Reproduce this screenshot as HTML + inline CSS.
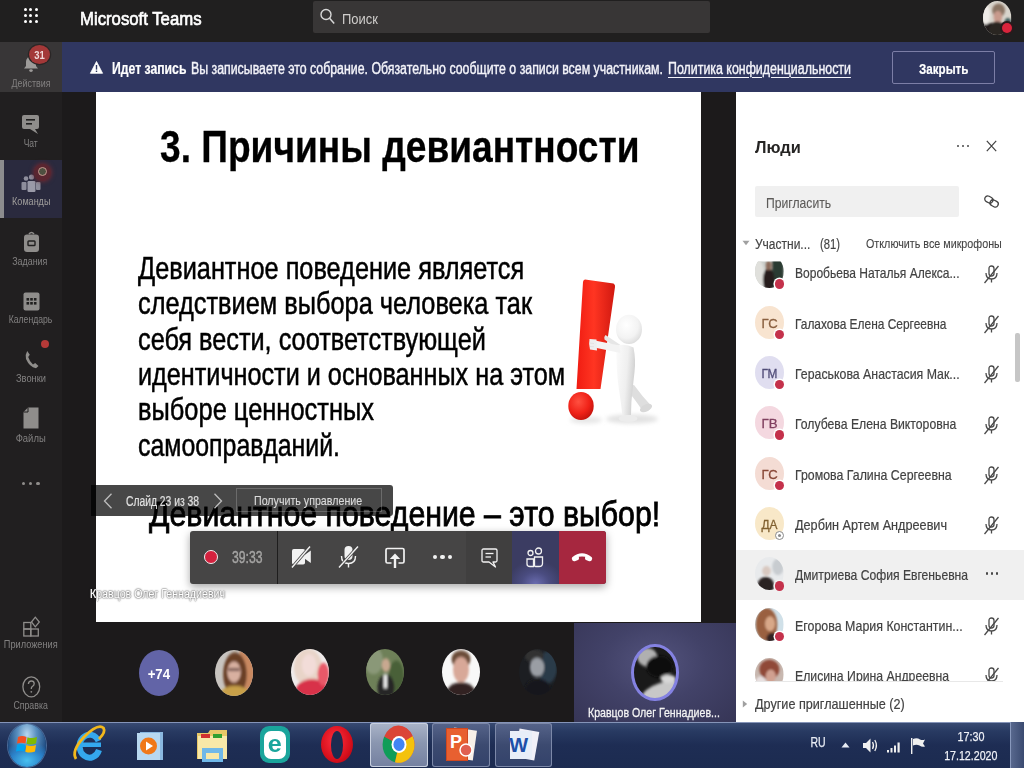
<!DOCTYPE html>
<html><head><meta charset="utf-8"><style>
html,body{margin:0;padding:0;width:1024px;height:768px;overflow:hidden;background:#1c1a1b;}
body{position:relative;font-family:"Liberation Sans", sans-serif;}
.t{position:absolute;white-space:nowrap;line-height:1;}
svg{position:absolute;overflow:visible;}
</style></head><body>
<div style="position:absolute;left:0px;top:0px;width:1024px;height:42px;background:#201f1f"></div>
<div style="position:absolute;left:23.9px;top:8.1px;width:3px;height:3px;background:#fff;border-radius:50%"></div>
<div style="position:absolute;left:29.3px;top:8.1px;width:3px;height:3px;background:#fff;border-radius:50%"></div>
<div style="position:absolute;left:34.8px;top:8.1px;width:3px;height:3px;background:#fff;border-radius:50%"></div>
<div style="position:absolute;left:23.9px;top:14.1px;width:3px;height:3px;background:#fff;border-radius:50%"></div>
<div style="position:absolute;left:29.3px;top:14.1px;width:3px;height:3px;background:#fff;border-radius:50%"></div>
<div style="position:absolute;left:34.8px;top:14.1px;width:3px;height:3px;background:#fff;border-radius:50%"></div>
<div style="position:absolute;left:23.9px;top:20.4px;width:3px;height:3px;background:#fff;border-radius:50%"></div>
<div style="position:absolute;left:29.3px;top:20.4px;width:3px;height:3px;background:#fff;border-radius:50%"></div>
<div style="position:absolute;left:34.8px;top:20.4px;width:3px;height:3px;background:#fff;border-radius:50%"></div>
<div class="t" style="left:80.0px;top:8.5px;font-size:19px;font-weight:400;color:#fff;transform:scaleX(0.881);transform-origin:left;-webkit-text-stroke:0.7px #fff">Microsoft Teams</div>
<div style="position:absolute;left:312.8px;top:0.5px;width:397.5px;height:32.5px;background:#383636;border-radius:2px"></div>
<svg style="left:320px;top:8px" width="16" height="18" viewBox="0 0 16 18"><circle cx="6" cy="6.5" r="5" fill="none" stroke="#d8d8d8" stroke-width="1.4"/><line x1="9.6" y1="10.3" x2="14.2" y2="15.6" stroke="#d8d8d8" stroke-width="1.5"/></svg>
<div class="t" style="left:342.0px;top:11.5px;font-size:14px;font-weight:400;color:#cfcdcb;transform:scaleX(0.928);transform-origin:left;">Поиск</div>
<svg style="left:982.8px;top:0.5px;" width="28.4" height="34.0" viewBox="-1 -1 2 2" preserveAspectRatio="none"><defs><clipPath id="ctp"><ellipse cx="0" cy="0" rx="1" ry="1"/></clipPath><filter id="ftp" x="-1" y="-1" width="3" height="3"><feGaussianBlur stdDeviation="0.06"/></filter></defs><g clip-path="url(#ctp)"><rect x="-1" y="-1" width="2" height="2" fill="#d8d4cc"/><g filter="url(#ftp)"><ellipse cx="0.1" cy="-0.45" rx="0.45" ry="0.4" fill="#8a7464"/><ellipse cx="0.05" cy="-0.05" rx="0.3" ry="0.38" fill="#c89a8c"/><rect x="-1" y="0.3" width="2" height="0.8" fill="#221e1e"/><ellipse cx="0" cy="0.7" rx="0.55" ry="0.5" fill="#2a2624"/><ellipse cx="0.75" cy="0.3" rx="0.25" ry="0.3" fill="#3a5a58"/><ellipse cx="-0.8" cy="-0.2" rx="0.3" ry="0.6" fill="#f0ece8"/></g></g></svg>
<div style="position:absolute;left:1001.5px;top:23px;width:10px;height:10px;background:#d9243c;border-radius:50%;box-shadow:0 0 0 2px #2a1a1c"></div>
<div style="position:absolute;left:0px;top:42px;width:62px;height:680px;background:#211f20"></div>
<div style="position:absolute;left:0px;top:42px;width:62px;height:50px;background:#383637"></div>
<div style="position:absolute;left:0px;top:159.5px;width:62px;height:58.5px;background:#2a2a3e"></div>
<div style="position:absolute;left:0px;top:159.5px;width:4px;height:58.5px;background:#8c8c8e"></div>
<div style="position:absolute;left:62px;top:42px;width:962px;height:50px;background:#303761"></div>
<svg style="left:90px;top:61px" width="13" height="13" viewBox="0 0 13 13"><path d="M6.5 0.5 L12.6 12.3 L0.4 12.3 Z" fill="#fff" stroke="#fff" stroke-width="0.8" stroke-linejoin="round"/><rect x="5.8" y="4" width="1.4" height="4.6" fill="#303761"/><rect x="5.8" y="9.6" width="1.4" height="1.4" fill="#303761"/></svg>
<div class="t" style="left:111.6px;top:60.6px;font-size:15.8px;font-weight:700;color:#fff;transform:scaleX(0.773);transform-origin:left;-webkit-text-stroke:0.2px #fff">Идет запись</div>
<div class="t" style="left:191.0px;top:60.6px;font-size:15.8px;font-weight:400;color:#f4f4fa;transform:scaleX(0.781);transform-origin:left;-webkit-text-stroke:0.4px #f4f4fa">Вы записываете это собрание. Обязательно сообщите о записи всем участникам.</div>
<div class="t" style="left:668.0px;top:60.6px;font-size:15.8px;font-weight:400;color:#f4f4fa;transform:scaleX(0.785);transform-origin:left;text-decoration:underline;text-underline-offset:2.5px;text-decoration-thickness:1px;-webkit-text-stroke:0.4px #f4f4fa">Политика конфиденциальности</div>
<div style="position:absolute;left:892px;top:50.5px;width:102.5px;height:33px;border:1px solid #7c7ea6;border-radius:2px;box-sizing:border-box"></div>
<div class="t" style="left:918.6px;top:60.9px;font-size:15.5px;font-weight:700;color:#fff;transform:scaleX(0.749);transform-origin:left;-webkit-text-stroke:0.2px #fff">Закрыть</div>
<div style="position:absolute;left:96px;top:92px;width:605px;height:530px;background:#fff"></div>
<div style="position:absolute;left:736px;top:92px;width:288px;height:630px;background:#fff"></div>
<div class="t" style="left:160.0px;top:124.6px;font-size:44.5px;font-weight:700;color:#000;transform:scaleX(0.834);transform-origin:left;-webkit-text-stroke:0.3px #000">3. Причины девиантности</div>
<div class="t" style="left:137.8px;top:252.8px;font-size:30.5px;font-weight:400;color:#000;transform:scaleX(0.830);transform-origin:left;-webkit-text-stroke:0.5px #000">Девиантное поведение является</div>
<div class="t" style="left:137.8px;top:288.1px;font-size:30.5px;font-weight:400;color:#000;transform:scaleX(0.831);transform-origin:left;-webkit-text-stroke:0.5px #000">следствием выбора человека так</div>
<div class="t" style="left:137.8px;top:323.5px;font-size:30.5px;font-weight:400;color:#000;transform:scaleX(0.829);transform-origin:left;-webkit-text-stroke:0.5px #000">себя вести, соответствующей</div>
<div class="t" style="left:137.8px;top:358.8px;font-size:30.5px;font-weight:400;color:#000;transform:scaleX(0.827);transform-origin:left;-webkit-text-stroke:0.5px #000">идентичности и основанных на этом</div>
<div class="t" style="left:137.8px;top:394.2px;font-size:30.5px;font-weight:400;color:#000;transform:scaleX(0.834);transform-origin:left;-webkit-text-stroke:0.5px #000">выборе ценностных</div>
<div class="t" style="left:137.8px;top:429.5px;font-size:30.5px;font-weight:400;color:#000;transform:scaleX(0.816);transform-origin:left;-webkit-text-stroke:0.5px #000">самооправданий.</div>
<div class="t" style="left:149.2px;top:495.9px;font-size:35px;font-weight:400;color:#000;transform:scaleX(0.865);transform-origin:left;-webkit-text-stroke:0.8px #000">Девиантное поведение – это выбор!</div>
<div class="t" style="left:7.5px;top:78.1px;font-size:10.5px;font-weight:400;color:#828080;transform:scaleX(0.848);transform-origin:center;">Действия</div>
<div class="t" style="left:21.7px;top:138.1px;font-size:10.5px;font-weight:400;color:#828080;transform:scaleX(0.809);transform-origin:center;">Чат</div>
<div class="t" style="left:8.6px;top:196.1px;font-size:10.5px;font-weight:400;color:#a09e9c;transform:scaleX(0.861);transform-origin:center;">Команды</div>
<div class="t" style="left:9.4px;top:255.6px;font-size:10.5px;font-weight:400;color:#828080;transform:scaleX(0.848);transform-origin:center;">Задания</div>
<div class="t" style="left:3.8px;top:314.1px;font-size:10.5px;font-weight:400;color:#828080;transform:scaleX(0.819);transform-origin:center;">Календарь</div>
<div class="t" style="left:14.0px;top:373.4px;font-size:10.5px;font-weight:400;color:#828080;transform:scaleX(0.885);transform-origin:center;">Звонки</div>
<div class="t" style="left:14.3px;top:432.6px;font-size:10.5px;font-weight:400;color:#828080;transform:scaleX(0.899);transform-origin:center;">Файлы</div>
<div class="t" style="left:0.2px;top:638.6px;font-size:10.5px;font-weight:400;color:#828080;transform:scaleX(0.876);transform-origin:center;">Приложения</div>
<div class="t" style="left:9.9px;top:699.6px;font-size:10.5px;font-weight:400;color:#828080;transform:scaleX(0.835);transform-origin:center;">Справка</div>
<svg style="left:22px;top:55px" width="18" height="18" viewBox="0 0 18 18"><path d="M9 1.5 C5.5 1.5 4 4.5 4 7.5 L4 11 L2 13.5 L16 13.5 L14 11 L14 7.5 C14 4.5 12.5 1.5 9 1.5 Z" fill="#9d9b99"/><ellipse cx="9" cy="15.6" rx="1.8" ry="1.3" fill="#9d9b99"/></svg>
<div style="position:absolute;left:28.6px;top:45.3px;width:21px;height:19px;background:#a33838;border-radius:50%;box-shadow:0 0 0 1.2px #2a2626"></div>
<div class="t" style="left:32.6px;top:49.8px;font-size:11.5px;font-weight:700;color:#f0d8d8;transform:scaleX(0.821);transform-origin:center;">31</div>
<svg style="left:21px;top:114px" width="19" height="21" viewBox="0 0 19 21"><path d="M3 1 H16 Q18 1 18 3 V13 Q18 15 16 15 H14 L17 20 L9 15 H3 Q1 15 1 13 V3 Q1 1 3 1 Z" fill="#8f8d8b"/><rect x="5" y="5" width="9" height="1.6" fill="#201f1f"/><rect x="5" y="9" width="6" height="1.6" fill="#201f1f"/></svg>
<svg style="left:20px;top:172px" width="22" height="22" viewBox="0 0 22 22"><circle cx="6" cy="6.5" r="2.3" fill="#8e8e9c"/><circle cx="11.5" cy="5" r="2.6" fill="#8e8e9c"/><rect x="1.5" y="10" width="5" height="8" rx="1" fill="#8e8e9c"/><rect x="7.5" y="9" width="8" height="11" rx="1.2" fill="#9a9aa8"/><rect x="16" y="10" width="4.5" height="8" rx="1" fill="#8e8e9c"/></svg>
<div style="position:absolute;left:34px;top:164px;width:17px;height:17px;border-radius:50%;background:#5a2630;box-shadow:0 0 4px 1px #6a2a34"></div>
<div style="position:absolute;left:38px;top:167px;width:9px;height:9px;border-radius:50%;border:1.3px solid #c89890;box-sizing:border-box;background:#4e5040"></div>
<svg style="left:23px;top:231px" width="17" height="22" viewBox="0 0 17 22"><path d="M6 3 Q8.5 0 11 3" stroke="#8f8d8b" stroke-width="1.6" fill="none"/><rect x="1" y="3.5" width="15" height="17.5" rx="3" fill="#8f8d8b"/><rect x="5" y="10" width="7" height="4.5" rx="0.8" fill="none" stroke="#201f1f" stroke-width="1.4"/></svg>
<svg style="left:23px;top:292px" width="17" height="19" viewBox="0 0 17 19"><rect x="0.5" y="0.5" width="16" height="18" rx="2" fill="#8f8d8b"/><g fill="#201f1f"><rect x="3.5" y="6" width="2.6" height="2.6"/><rect x="7.2" y="6" width="2.6" height="2.6"/><rect x="10.9" y="6" width="2.6" height="2.6"/><rect x="3.5" y="10" width="2.6" height="2.6"/><rect x="7.2" y="10" width="2.6" height="2.6"/><rect x="10.9" y="10" width="2.6" height="2.6"/></g></svg>
<div style="position:absolute;left:41px;top:339.5px;width:8px;height:8px;background:#b53a38;border-radius:50%"></div>
<svg style="left:24px;top:350px" width="15" height="19" viewBox="0 0 15 19"><path d="M3.2 1 L5.8 4.8 L4.2 7 Q5.5 11.5 9 14.5 L11.2 13 L14.5 16 L12 18.3 Q5.5 17 2 9 Q1 4.5 3.2 1 Z" fill="#8f8d8b"/></svg>
<svg style="left:23px;top:407px" width="16" height="22" viewBox="0 0 16 22"><path d="M5 0.5 H15.5 V21.5 H0.5 V5 Z" fill="#8f8d8b"/><path d="M5 0.5 V5 H0.5" fill="none" stroke="#201f1f" stroke-width="1"/></svg>
<div style="position:absolute;left:22.0px;top:481.6px;width:3.2px;height:3.2px;background:#8f8d8b;border-radius:50%"></div>
<div style="position:absolute;left:29.099999999999998px;top:481.6px;width:3.2px;height:3.2px;background:#8f8d8b;border-radius:50%"></div>
<div style="position:absolute;left:36.4px;top:481.6px;width:3.2px;height:3.2px;background:#8f8d8b;border-radius:50%"></div>
<svg style="left:23px;top:616px" width="17" height="21" viewBox="0 0 17 21"><g fill="none" stroke="#8f8d8b" stroke-width="1.3"><rect x="0.8" y="6.5" width="7" height="6.5"/><rect x="0.8" y="13" width="7" height="7"/><rect x="7.8" y="13" width="7.5" height="7"/><path d="M8.5 6 L12.3 1.2 L16.3 6 L12.3 10.8 Z"/></g></svg>
<svg style="left:21.5px;top:675.5px" width="19" height="22" viewBox="0 0 19 22"><ellipse cx="9.3" cy="10.8" rx="8.4" ry="10" fill="none" stroke="#8f8d8b" stroke-width="1.3"/><path d="M6.4 8 Q6.6 5 9.4 5 Q12.2 5 12.2 7.8 Q12.2 9.6 10 10.8 Q9.3 11.4 9.3 13" fill="none" stroke="#8f8d8b" stroke-width="1.3"/><circle cx="9.3" cy="15.8" r="0.9" fill="#8f8d8b"/></svg>
<svg style="left:560px;top:270px" width="110" height="165" viewBox="560 270 110 165">
<defs>
<linearGradient id="exg" x1="0" y1="0" x2="1" y2="0"><stop offset="0" stop-color="#f01c12"/><stop offset="0.45" stop-color="#ff3522"/><stop offset="1" stop-color="#d01810"/></linearGradient>
<radialGradient id="dotg" cx="0.4" cy="0.35" r="0.7"><stop offset="0" stop-color="#ff5040"/><stop offset="0.6" stop-color="#f02218"/><stop offset="1" stop-color="#c0120c"/></radialGradient>
<radialGradient id="headg" cx="0.4" cy="0.35" r="0.75"><stop offset="0" stop-color="#ffffff"/><stop offset="0.6" stop-color="#f3f3f3"/><stop offset="1" stop-color="#d6d6d6"/></radialGradient>
<filter id="bl" x="-50%" y="-50%" width="200%" height="200%"><feGaussianBlur stdDeviation="2"/></filter>
</defs>
<ellipse cx="632" cy="419" rx="26" ry="4.5" fill="#e2e2e2" filter="url(#bl)"/>
<ellipse cx="586" cy="420" rx="16" ry="3.5" fill="#e6e6e6" filter="url(#bl)"/>
<path d="M585 279.5 L613.5 283.5 Q615.5 284.5 615 287 L600.5 389 L576.5 389 L583 282 Q583.3 279.6 585 279.5 Z" fill="url(#exg)"/>
<ellipse cx="581" cy="406" rx="12.7" ry="14" fill="url(#dotg)"/>
<defs><linearGradient id="bodyg" x1="0" y1="0" x2="1" y2="0.3"><stop offset="0" stop-color="#fbfbfb"/><stop offset="0.6" stop-color="#efefef"/><stop offset="1" stop-color="#d2d2d2"/></linearGradient></defs>
<path d="M627 386 L634 385 Q642 396 650.5 405 Q652 409 647 411 L642 410 Q634 398 627 390 Z" fill="#dedede"/>
<ellipse cx="646" cy="408" rx="6.5" ry="3.5" transform="rotate(-25 646 408)" fill="#d8d8d8"/>
<path d="M620.5 345 L605.5 335 Q603.5 337 604.5 339.5 L619 350 Z" fill="#e6e6e6"/>
<path d="M616.5 346 Q625 343 633.5 347.5 Q636 360 634.5 372 L632.5 390 Q631 402 631 415 L622.5 416.5 Q621 402 619 390 Q616 370 616.5 346 Z" fill="url(#bodyg)"/>
<ellipse cx="628" cy="418.5" rx="9.5" ry="3.6" fill="#ececec"/>
<path d="M619.5 345.5 L595 340.5 L594.5 347.5 L620.5 353 Z" fill="#f3f3f3"/>
<path d="M589.5 339 L596.5 339.5 L597 350.5 L590 349.5 Q588.5 344 589.5 339 Z" fill="#efefef"/>
<path d="M589.5 343 L594 343.5 M589.8 346.5 L594 346.8" stroke="#d8d8d8" stroke-width="0.6"/>
<ellipse cx="629" cy="329.4" rx="13" ry="14.6" fill="url(#headg)"/>
</svg>
<div style="position:absolute;left:90.5px;top:485px;width:302px;height:31px;background:rgba(0,0,0,0.72);border-radius:0 3px 3px 0"></div>
<svg style="left:103px;top:493px" width="10" height="16" viewBox="0 0 10 16"><path d="M8.5 0.8 L1.5 8 L8.5 15.2" fill="none" stroke="#bdbdbd" stroke-width="1.3"/></svg>
<svg style="left:213px;top:493px" width="10" height="16" viewBox="0 0 10 16"><path d="M1.5 0.8 L8.5 8 L1.5 15.2" fill="none" stroke="#bdbdbd" stroke-width="1.3"/></svg>
<div class="t" style="left:126.3px;top:493.7px;font-size:14px;font-weight:400;color:#e0e0e0;transform:scaleX(0.737);transform-origin:left;-webkit-text-stroke:0.2px #e0e0e0">Слайд 23 из 38</div>
<div style="position:absolute;left:236px;top:487.7px;width:145.5px;height:24px;border:1px solid rgba(255,255,255,0.2);box-sizing:border-box"></div>
<div class="t" style="left:254.4px;top:493.8px;font-size:13.5px;font-weight:400;color:#dadada;transform:scaleX(0.790);transform-origin:left;-webkit-text-stroke:0.15px #dadada">Получить управление</div>
<div style="position:absolute;left:189.5px;top:530.5px;width:416px;height:53px;border-radius:3px;background:#464545;box-shadow:0 3px 8px rgba(0,0,0,0.35);overflow:hidden"><div style="position:absolute;left:87.5px;top:0;width:1px;height:53px;background:#1e1d1d"></div><div style="position:absolute;left:276px;top:0;width:46px;height:53px;background:#403f3f"></div><div style="position:absolute;left:322px;top:0;width:47px;height:53px;background:radial-gradient(ellipse 60% 45% at 50% 100%, #6a6cb0 0%, #4a4c80 50%, #3b3c62 100%)"></div><div style="position:absolute;left:369px;top:0;width:47px;height:53px;background:#a6273f"></div></div>
<div style="position:absolute;left:203.5px;top:550.3px;width:14px;height:14px;background:#d4213e;border:1.8px solid #f0f0f0;border-radius:50%;box-sizing:border-box"></div>
<div class="t" style="left:231.8px;top:549.9px;font-size:16px;font-weight:400;color:#a5a4a3;transform:scaleX(0.762);transform-origin:left;-webkit-text-stroke:0.4px #a5a4a3">39:33</div>
<svg style="left:290px;top:545px" width="23" height="24" viewBox="0 0 23 24"><rect x="2" y="4" width="13" height="15.5" rx="1.8" fill="#f2f2f2"/><path d="M14.5 10 L20.8 5.5 V18 L14.5 13.5 Z" fill="#f2f2f2"/><line x1="2" y1="22.5" x2="20" y2="1.5" stroke="#464545" stroke-width="3"/><line x1="2" y1="22.5" x2="20" y2="1.5" stroke="#f2f2f2" stroke-width="1.4"/></svg>
<svg style="left:337px;top:545px" width="23" height="24" viewBox="0 0 23 24"><rect x="7.5" y="1" width="8" height="14" rx="4" fill="#f2f2f2"/><path d="M4.5 11 Q4.5 18.5 11.5 18.5 Q18.5 18.5 18.5 11" fill="none" stroke="#f2f2f2" stroke-width="1.4"/><line x1="11.5" y1="18.5" x2="11.5" y2="22.5" stroke="#f2f2f2" stroke-width="1.4"/><line x1="2" y1="22.5" x2="21" y2="1.5" stroke="#464545" stroke-width="3"/><line x1="2" y1="22.5" x2="21" y2="1.5" stroke="#f2f2f2" stroke-width="1.4"/></svg>
<svg style="left:385px;top:547px" width="21" height="21" viewBox="0 0 21 21"><path d="M6.5 16 H2.5 Q1 16 1 14.5 V3 Q1 1.5 2.5 1.5 H17.5 Q19 1.5 19 3 V14.5 Q19 16 17.5 16 H13.5" fill="none" stroke="#f2f2f2" stroke-width="1.7"/><path d="M10 21 V10.5" stroke="#f2f2f2" stroke-width="2.4"/><path d="M4.8 12 L10 6.5 L15.2 12 Z" fill="#f2f2f2"/></svg>
<div style="position:absolute;left:432.6px;top:554.8px;width:4.4px;height:4.4px;background:#f2f2f2;border-radius:50%"></div>
<div style="position:absolute;left:440.3px;top:554.8px;width:4.4px;height:4.4px;background:#f2f2f2;border-radius:50%"></div>
<div style="position:absolute;left:448.1px;top:554.8px;width:4.4px;height:4.4px;background:#f2f2f2;border-radius:50%"></div>
<svg style="left:481px;top:548px" width="17" height="20" viewBox="0 0 17 20"><path d="M2.5 1 H14.5 Q16 1 16 2.5 V12.5 Q16 14 14.5 14 H12 L14.5 19 L8 14 H2.5 Q1 14 1 12.5 V2.5 Q1 1 2.5 1 Z" fill="none" stroke="#f2f2f2" stroke-width="1.3" stroke-linejoin="round"/><line x1="4.5" y1="5.5" x2="12.5" y2="5.5" stroke="#f2f2f2" stroke-width="1.3"/><line x1="4.5" y1="9" x2="10" y2="9" stroke="#f2f2f2" stroke-width="1.3"/></svg>
<svg style="left:526px;top:547px" width="18" height="21" viewBox="0 0 18 21"><g fill="none" stroke="#f2f2f2" stroke-width="1.3"><circle cx="4.5" cy="6" r="2.5"/><circle cx="12.5" cy="4" r="3"/><path d="M1 12 V17 Q1 19.5 4 19.5 H7.5 V12 Z"/><path d="M8.5 10 H16.5 V16.5 Q16.5 19.5 13 19.5 H9.5 Q8.5 19.5 8.5 18.5 Z"/></g></svg>
<svg style="left:571px;top:551px" width="22" height="12" viewBox="0 0 22 12"><path d="M1.2 6.2 Q11 -1.5 20.8 6.2 Q21.8 7.5 20.5 9.5 Q19.5 10.8 17.5 10 L15 9 Q13.8 8.5 14 7 L14.2 5.8 Q11 5 7.8 5.8 L8 7 Q8.2 8.5 7 9 L4.5 10 Q2.5 10.8 1.5 9.5 Q0.2 7.5 1.2 6.2 Z" fill="#fff"/></svg>
<div class="t" style="left:90.3px;top:587.8px;font-size:12px;font-weight:400;color:#ffffff;transform:scaleX(0.886);transform-origin:left;text-shadow:0 0 2px #222,0 0 1px #444;-webkit-text-stroke:0.2px #fff">Кравцов Олег Геннадиевич</div>
<div style="position:absolute;left:139.3px;top:650px;width:40px;height:46px;border-radius:50%;background:#6264a7"></div>
<div class="t" style="left:147.4px;top:667.4px;font-size:14px;font-weight:700;color:#fff;transform:scaleX(0.947);transform-origin:center;">+74</div>
<svg style="left:214.9px;top:649.5px;" width="38.0" height="46.0" viewBox="-1 -1 2 2" preserveAspectRatio="none"><defs><clipPath id="cp1"><ellipse cx="0" cy="0" rx="1" ry="1"/></clipPath><filter id="fp1" x="-1" y="-1" width="3" height="3"><feGaussianBlur stdDeviation="0.06"/></filter></defs><g clip-path="url(#cp1)"><rect x="-1" y="-1" width="2" height="2" fill="#c8c4c0"/><g filter="url(#fp1)"><rect x="0.3" y="-1" width="0.8" height="2" fill="#c88860"/><ellipse cx="0.05" cy="0.05" rx="0.62" ry="0.95" fill="#6a4028"/><ellipse cx="0" cy="-0.05" rx="0.36" ry="0.45" fill="#d8b0a0"/><rect x="-0.3" y="-0.2" width="0.6" height="0.1" fill="#503030"/><ellipse cx="0.05" cy="1.05" rx="0.85" ry="0.5" fill="#c8a048"/></g></g></svg>
<svg style="left:290.5px;top:649.0px;" width="38.0" height="46.0" viewBox="-1 -1 2 2" preserveAspectRatio="none"><defs><clipPath id="cp2"><ellipse cx="0" cy="0" rx="1" ry="1"/></clipPath><filter id="fp2" x="-1" y="-1" width="3" height="3"><feGaussianBlur stdDeviation="0.06"/></filter></defs><g clip-path="url(#cp2)"><rect x="-1" y="-1" width="2" height="2" fill="#f0ecec"/><g filter="url(#fp2)"><ellipse cx="-0.1" cy="-0.2" rx="0.75" ry="0.8" fill="#e8d4c8"/><ellipse cx="-0.05" cy="-0.3" rx="0.38" ry="0.48" fill="#f2dcd8"/><ellipse cx="0.1" cy="0.85" rx="0.85" ry="0.55" fill="#d8304a"/><ellipse cx="0.7" cy="0.1" rx="0.3" ry="0.5" fill="#e85868"/></g></g></svg>
<svg style="left:365.9px;top:649.0px;" width="38.0" height="46.0" viewBox="-1 -1 2 2" preserveAspectRatio="none"><defs><clipPath id="cp3"><ellipse cx="0" cy="0" rx="1" ry="1"/></clipPath><filter id="fp3" x="-1" y="-1" width="3" height="3"><feGaussianBlur stdDeviation="0.06"/></filter></defs><g clip-path="url(#cp3)"><rect x="-1" y="-1" width="2" height="2" fill="#6e8058"/><g filter="url(#fp3)"><ellipse cx="-0.6" cy="-0.5" rx="0.5" ry="0.6" fill="#8a9878"/><ellipse cx="0.6" cy="0.2" rx="0.4" ry="0.7" fill="#4a6038"/><ellipse cx="0.05" cy="-0.3" rx="0.22" ry="0.3" fill="#c8a890"/><ellipse cx="0.05" cy="0.7" rx="0.45" ry="0.6" fill="#282828"/><rect x="-0.08" y="0.1" width="0.2" height="0.6" fill="#e8e8e8"/></g></g></svg>
<svg style="left:442.0px;top:649.0px;" width="38.0" height="46.0" viewBox="-1 -1 2 2" preserveAspectRatio="none"><defs><clipPath id="cp4"><ellipse cx="0" cy="0" rx="1" ry="1"/></clipPath><filter id="fp4" x="-1" y="-1" width="3" height="3"><feGaussianBlur stdDeviation="0.06"/></filter></defs><g clip-path="url(#cp4)"><rect x="-1" y="-1" width="2" height="2" fill="#f8f8f8"/><g filter="url(#fp4)"><ellipse cx="0" cy="-0.55" rx="0.5" ry="0.4" fill="#6a4c38"/><ellipse cx="0" cy="-0.1" rx="0.42" ry="0.55" fill="#d8a898"/><ellipse cx="0" cy="1.0" rx="0.8" ry="0.55" fill="#302420"/></g></g></svg>
<svg style="left:519.0px;top:649.0px;" width="38.0" height="46.0" viewBox="-1 -1 2 2" preserveAspectRatio="none"><defs><clipPath id="cp5"><ellipse cx="0" cy="0" rx="1" ry="1"/></clipPath><filter id="fp5" x="-1" y="-1" width="3" height="3"><feGaussianBlur stdDeviation="0.06"/></filter></defs><g clip-path="url(#cp5)"><rect x="-1" y="-1" width="2" height="2" fill="#1c1e22"/><g filter="url(#fp5)"><ellipse cx="0.5" cy="-0.2" rx="0.5" ry="0.7" fill="#2a3a48"/><ellipse cx="-0.2" cy="-0.7" rx="0.5" ry="0.3" fill="#303030"/><ellipse cx="-0.05" cy="-0.2" rx="0.38" ry="0.42" fill="#9a9ea4"/><ellipse cx="0" cy="0.8" rx="0.7" ry="0.5" fill="#14161a"/></g></g></svg>
<div style="position:absolute;left:573.5px;top:622.5px;width:162px;height:99.5px;background:radial-gradient(ellipse at 50% 40%, #53537d 0%, #424268 45%, #363556 100%)"></div>
<svg style="left:633.1px;top:645.3px;" width="44.0" height="54.0" viewBox="-1 -1 2 2" preserveAspectRatio="none"><defs><clipPath id="cpp"><ellipse cx="0" cy="0" rx="1" ry="1"/></clipPath><filter id="fpp" x="-1" y="-1" width="3" height="3"><feGaussianBlur stdDeviation="0.06"/></filter></defs><g clip-path="url(#cpp)"><rect x="-1" y="-1" width="2" height="2" fill="#1a1a1a"/><g filter="url(#fpp)"><ellipse cx="-0.35" cy="-0.55" rx="0.45" ry="0.35" fill="#b0b0b0"/><ellipse cx="0.2" cy="-0.2" rx="0.6" ry="0.4" fill="#101010"/><ellipse cx="0.1" cy="0.75" rx="0.9" ry="0.3" fill="#c8c8c8" transform="rotate(-15)"/><ellipse cx="0.6" cy="0.25" rx="0.35" ry="0.15" fill="#d8d8d8"/></g></g></svg>
<div style="position:absolute;left:631.3px;top:643.5px;width:47.6px;height:57.6px;border-radius:50%;border:3.4px solid #8482e2;box-sizing:border-box"></div>
<div class="t" style="left:587.8px;top:706.2px;font-size:13.5px;font-weight:400;color:#f4f4f4;transform:scaleX(0.784);transform-origin:left;-webkit-text-stroke:0.3px #f4f4f4">Кравцов Олег Геннадиев...</div>
<div class="t" style="left:755.3px;top:139.0px;font-size:16.5px;font-weight:700;color:#252423;transform:scaleX(0.992);transform-origin:left;">Люди</div>
<div style="position:absolute;left:956.6px;top:144.5px;width:2.8px;height:2.8px;background:#484848;border-radius:50%"></div>
<div style="position:absolute;left:961.6px;top:144.5px;width:2.8px;height:2.8px;background:#484848;border-radius:50%"></div>
<div style="position:absolute;left:966.6px;top:144.5px;width:2.8px;height:2.8px;background:#484848;border-radius:50%"></div>
<svg style="left:986px;top:140px" width="11" height="12" viewBox="0 0 11 12"><path d="M0.8 0.8 L10.2 11.2 M10.2 0.8 L0.8 11.2" stroke="#424242" stroke-width="1.2"/></svg>
<div style="position:absolute;left:755.3px;top:186px;width:203.7px;height:30.5px;background:#f0f0f0;border-radius:2px"></div>
<div class="t" style="left:766.3px;top:196.0px;font-size:14.6px;font-weight:400;color:#5c5a58;transform:scaleX(0.834);transform-origin:left;-webkit-text-stroke:0.1px #5c5a58">Пригласить</div>
<svg style="left:983px;top:193px" width="17" height="17" viewBox="0 0 17 17"><g fill="none" stroke="#424242" stroke-width="1.3" transform="rotate(28 8.5 8.5)"><rect x="1" y="5" width="8.5" height="6" rx="3"/><rect x="7.5" y="6" width="8.5" height="6" rx="3"/></g></svg>
<svg style="left:742px;top:240px" width="8" height="6" viewBox="0 0 8 6"><path d="M0.5 0.8 L7.5 0.8 L4 5.2 Z" fill="#a0a0a0"/></svg>
<div class="t" style="left:755.3px;top:236.5px;font-size:14px;font-weight:400;color:#424242;transform:scaleX(0.857);transform-origin:left;-webkit-text-stroke:0.15px #424242">Участни...</div>
<div class="t" style="left:820.4px;top:236.5px;font-size:14px;font-weight:400;color:#424242;transform:scaleX(0.803);transform-origin:left;-webkit-text-stroke:0.15px #424242">(81)</div>
<div class="t" style="left:866.2px;top:237.4px;font-size:13px;font-weight:400;color:#444;transform:scaleX(0.827);transform-origin:left;-webkit-text-stroke:0.1px #444">Отключить все микрофоны</div>
<div style="position:absolute;left:736px;top:550px;width:288px;height:50px;background:#f0f0f0"></div>
<div style="position:absolute;left:0;top:0;width:1024px;height:768px;clip-path:inset(261.5px 0 86.5px 736px)">
<svg style="left:755.0px;top:255.1px;" width="28.7" height="33.0" viewBox="-1 -1 2 2" preserveAspectRatio="none"><defs><clipPath id="cr0"><ellipse cx="0" cy="0" rx="1" ry="1"/></clipPath><filter id="fr0" x="-1" y="-1" width="3" height="3"><feGaussianBlur stdDeviation="0.06"/></filter></defs><g clip-path="url(#cr0)"><rect x="-1" y="-1" width="2" height="2" fill="#c8ccc8"/><g filter="url(#fr0)"><rect x="0.2" y="-1" width="0.8" height="2" fill="#2a3a30"/><ellipse cx="-0.75" cy="0.2" rx="0.4" ry="0.9" fill="#e0e0dc"/><ellipse cx="-0.05" cy="0.5" rx="0.4" ry="0.7" fill="#281c1e"/><ellipse cx="-0.05" cy="-0.35" rx="0.2" ry="0.28" fill="#8a6a5a"/></g></g></svg>
<div style="position:absolute;left:774.5px;top:279.1px;width:9.5px;height:9.5px;border-radius:50%;background:#c4314b;box-shadow:0 0 0 1.5px #fff"></div>
<div class="t" style="left:795.4px;top:266.2px;font-size:14.6px;font-weight:400;color:#424242;transform:scaleX(0.825);transform-origin:left;-webkit-text-stroke:0.2px #424242">Воробьева Наталья Алекса...</div>
<svg style="left:983px;top:264.6px" width="17" height="19" viewBox="0 0 17 19"><g fill="none" stroke="#4a4a4a" stroke-width="1.3"><path d="M6 3.5 Q6 1 8.5 1 Q11 1 11 3.5 V8.5 Q11 11 8.5 11 Q6 11 6 8.5 Z"/><path d="M3 8 Q3 14 8.5 14 Q14 14 14 8"/><path d="M8.5 14 V17.5"/><path d="M1.5 18 L15.5 1"/></g></svg>
<div style="position:absolute;left:755px;top:305.5px;width:28.7px;height:33px;border-radius:50%;background:#f8e4d0"></div>
<div class="t" style="left:761.7px;top:317.6px;font-size:12.5px;font-weight:400;color:#8a6040;transform:scaleX(1.050);transform-origin:center;-webkit-text-stroke:0.3px #8a6040">ГС</div>
<div style="position:absolute;left:774.5px;top:329.5px;width:9.5px;height:9.5px;border-radius:50%;background:#c4314b;box-shadow:0 0 0 1.5px #fff"></div>
<div class="t" style="left:795.4px;top:316.6px;font-size:14.6px;font-weight:400;color:#424242;transform:scaleX(0.817);transform-origin:left;-webkit-text-stroke:0.2px #424242">Галахова Елена Сергеевна</div>
<svg style="left:983px;top:315.0px" width="17" height="19" viewBox="0 0 17 19"><g fill="none" stroke="#4a4a4a" stroke-width="1.3"><path d="M6 3.5 Q6 1 8.5 1 Q11 1 11 3.5 V8.5 Q11 11 8.5 11 Q6 11 6 8.5 Z"/><path d="M3 8 Q3 14 8.5 14 Q14 14 14 8"/><path d="M8.5 14 V17.5"/><path d="M1.5 18 L15.5 1"/></g></svg>
<div style="position:absolute;left:755px;top:355.8px;width:28.7px;height:33px;border-radius:50%;background:#e0def0"></div>
<div class="t" style="left:760.8px;top:367.9px;font-size:12.5px;font-weight:400;color:#504c78;transform:scaleX(0.946);transform-origin:center;-webkit-text-stroke:0.3px #504c78">ГМ</div>
<div style="position:absolute;left:774.5px;top:379.8px;width:9.5px;height:9.5px;border-radius:50%;background:#c4314b;box-shadow:0 0 0 1.5px #fff"></div>
<div class="t" style="left:795.4px;top:366.9px;font-size:14.6px;font-weight:400;color:#424242;transform:scaleX(0.845);transform-origin:left;-webkit-text-stroke:0.2px #424242">Гераськова Анастасия Мак...</div>
<svg style="left:983px;top:365.3px" width="17" height="19" viewBox="0 0 17 19"><g fill="none" stroke="#4a4a4a" stroke-width="1.3"><path d="M6 3.5 Q6 1 8.5 1 Q11 1 11 3.5 V8.5 Q11 11 8.5 11 Q6 11 6 8.5 Z"/><path d="M3 8 Q3 14 8.5 14 Q14 14 14 8"/><path d="M8.5 14 V17.5"/><path d="M1.5 18 L15.5 1"/></g></svg>
<div style="position:absolute;left:755px;top:406.2px;width:28.7px;height:33px;border-radius:50%;background:#f4d8e0"></div>
<div class="t" style="left:761.7px;top:418.3px;font-size:12.5px;font-weight:400;color:#804060;transform:scaleX(1.059);transform-origin:center;-webkit-text-stroke:0.3px #804060">ГВ</div>
<div style="position:absolute;left:774.5px;top:430.2px;width:9.5px;height:9.5px;border-radius:50%;background:#c4314b;box-shadow:0 0 0 1.5px #fff"></div>
<div class="t" style="left:795.4px;top:417.3px;font-size:14.6px;font-weight:400;color:#424242;transform:scaleX(0.837);transform-origin:left;-webkit-text-stroke:0.2px #424242">Голубева Елена Викторовна</div>
<svg style="left:983px;top:415.7px" width="17" height="19" viewBox="0 0 17 19"><g fill="none" stroke="#4a4a4a" stroke-width="1.3"><path d="M6 3.5 Q6 1 8.5 1 Q11 1 11 3.5 V8.5 Q11 11 8.5 11 Q6 11 6 8.5 Z"/><path d="M3 8 Q3 14 8.5 14 Q14 14 14 8"/><path d="M8.5 14 V17.5"/><path d="M1.5 18 L15.5 1"/></g></svg>
<div style="position:absolute;left:755px;top:456.5px;width:28.7px;height:33px;border-radius:50%;background:#f4dcd4"></div>
<div class="t" style="left:761.7px;top:468.6px;font-size:12.5px;font-weight:400;color:#884838;transform:scaleX(1.050);transform-origin:center;-webkit-text-stroke:0.3px #884838">ГС</div>
<div style="position:absolute;left:774.5px;top:480.5px;width:9.5px;height:9.5px;border-radius:50%;background:#c4314b;box-shadow:0 0 0 1.5px #fff"></div>
<div class="t" style="left:795.4px;top:467.6px;font-size:14.6px;font-weight:400;color:#424242;transform:scaleX(0.846);transform-origin:left;-webkit-text-stroke:0.2px #424242">Громова Галина Сергеевна</div>
<svg style="left:983px;top:466.0px" width="17" height="19" viewBox="0 0 17 19"><g fill="none" stroke="#4a4a4a" stroke-width="1.3"><path d="M6 3.5 Q6 1 8.5 1 Q11 1 11 3.5 V8.5 Q11 11 8.5 11 Q6 11 6 8.5 Z"/><path d="M3 8 Q3 14 8.5 14 Q14 14 14 8"/><path d="M8.5 14 V17.5"/><path d="M1.5 18 L15.5 1"/></g></svg>
<div style="position:absolute;left:755px;top:506.9px;width:28.7px;height:33px;border-radius:50%;background:#f8e8c8"></div>
<div class="t" style="left:760.9px;top:519.0px;font-size:12.5px;font-weight:400;color:#806030;transform:scaleX(0.952);transform-origin:center;-webkit-text-stroke:0.3px #806030">ДА</div>
<div style="position:absolute;left:775px;top:531.4px;width:9px;height:9px;border-radius:50%;background:#fff;box-sizing:border-box;border:1px solid #8a8a8a"></div>
<div style="position:absolute;left:778px;top:534.4px;width:3px;height:3px;border-radius:50%;background:#8a8a8a"></div>
<div class="t" style="left:795.4px;top:518.0px;font-size:14.6px;font-weight:400;color:#424242;transform:scaleX(0.868);transform-origin:left;-webkit-text-stroke:0.2px #424242">Дербин Артем Андреевич</div>
<svg style="left:983px;top:516.4px" width="17" height="19" viewBox="0 0 17 19"><g fill="none" stroke="#4a4a4a" stroke-width="1.3"><path d="M6 3.5 Q6 1 8.5 1 Q11 1 11 3.5 V8.5 Q11 11 8.5 11 Q6 11 6 8.5 Z"/><path d="M3 8 Q3 14 8.5 14 Q14 14 14 8"/><path d="M8.5 14 V17.5"/><path d="M1.5 18 L15.5 1"/></g></svg>
<svg style="left:755.0px;top:557.2px;" width="28.7" height="33.0" viewBox="-1 -1 2 2" preserveAspectRatio="none"><defs><clipPath id="cr6"><ellipse cx="0" cy="0" rx="1" ry="1"/></clipPath><filter id="fr6" x="-1" y="-1" width="3" height="3"><feGaussianBlur stdDeviation="0.06"/></filter></defs><g clip-path="url(#cr6)"><rect x="-1" y="-1" width="2" height="2" fill="#e8eaec"/><g filter="url(#fr6)"><ellipse cx="0.6" cy="-0.4" rx="0.4" ry="0.5" fill="#c8ccd0"/><ellipse cx="-0.2" cy="-0.15" rx="0.3" ry="0.3" fill="#d8c8c0"/><ellipse cx="-0.25" cy="0.75" rx="0.6" ry="0.55" fill="#2a2222"/></g></g></svg>
<div style="position:absolute;left:774.5px;top:581.2px;width:9.5px;height:9.5px;border-radius:50%;background:#c4314b;box-shadow:0 0 0 1.5px #f0f0f0"></div>
<div class="t" style="left:795.4px;top:568.3px;font-size:14.6px;font-weight:400;color:#424242;transform:scaleX(0.832);transform-origin:left;-webkit-text-stroke:0.2px #424242">Дмитриева София Евгеньевна</div>
<div style="position:absolute;left:985.6px;top:572.3000000000001px;width:2.8px;height:2.8px;background:#484848;border-radius:50%"></div>
<div style="position:absolute;left:990.6px;top:572.3000000000001px;width:2.8px;height:2.8px;background:#484848;border-radius:50%"></div>
<div style="position:absolute;left:995.6px;top:572.3000000000001px;width:2.8px;height:2.8px;background:#484848;border-radius:50%"></div>
<svg style="left:755.0px;top:607.5px;" width="28.7" height="33.0" viewBox="-1 -1 2 2" preserveAspectRatio="none"><defs><clipPath id="cr7"><ellipse cx="0" cy="0" rx="1" ry="1"/></clipPath><filter id="fr7" x="-1" y="-1" width="3" height="3"><feGaussianBlur stdDeviation="0.06"/></filter></defs><g clip-path="url(#cr7)"><rect x="-1" y="-1" width="2" height="2" fill="#d0e0e8"/><g filter="url(#fr7)"><ellipse cx="-0.2" cy="0" rx="0.75" ry="1" fill="#9a6040"/><ellipse cx="0.05" cy="-0.05" rx="0.35" ry="0.45" fill="#d8a888"/><ellipse cx="0.2" cy="0.85" rx="0.4" ry="0.35" fill="#302020"/></g></g></svg>
<div style="position:absolute;left:774.5px;top:631.5px;width:9.5px;height:9.5px;border-radius:50%;background:#c4314b;box-shadow:0 0 0 1.5px #fff"></div>
<div class="t" style="left:795.4px;top:618.7px;font-size:14.6px;font-weight:400;color:#424242;transform:scaleX(0.850);transform-origin:left;-webkit-text-stroke:0.2px #424242">Егорова Мария Константин...</div>
<svg style="left:983px;top:617.0px" width="17" height="19" viewBox="0 0 17 19"><g fill="none" stroke="#4a4a4a" stroke-width="1.3"><path d="M6 3.5 Q6 1 8.5 1 Q11 1 11 3.5 V8.5 Q11 11 8.5 11 Q6 11 6 8.5 Z"/><path d="M3 8 Q3 14 8.5 14 Q14 14 14 8"/><path d="M8.5 14 V17.5"/><path d="M1.5 18 L15.5 1"/></g></svg>
<svg style="left:755.0px;top:657.9px;" width="28.7" height="33.0" viewBox="-1 -1 2 2" preserveAspectRatio="none"><defs><clipPath id="cr8"><ellipse cx="0" cy="0" rx="1" ry="1"/></clipPath><filter id="fr8" x="-1" y="-1" width="3" height="3"><feGaussianBlur stdDeviation="0.06"/></filter></defs><g clip-path="url(#cr8)"><rect x="-1" y="-1" width="2" height="2" fill="#c8b8b0"/><g filter="url(#fr8)"><ellipse cx="0" cy="-0.3" rx="0.7" ry="0.6" fill="#904838"/><ellipse cx="0.1" cy="0.1" rx="0.35" ry="0.4" fill="#d0a090"/><ellipse cx="-0.6" cy="0.6" rx="0.4" ry="0.5" fill="#e8e0e0"/><ellipse cx="0.1" cy="0.9" rx="0.5" ry="0.4" fill="#603838"/></g></g></svg>
<div class="t" style="left:795.4px;top:669.0px;font-size:14.6px;font-weight:400;color:#424242;transform:scaleX(0.839);transform-origin:left;-webkit-text-stroke:0.2px #424242">Елисина Ирина Андреевна</div>
<svg style="left:983px;top:667.4px" width="17" height="19" viewBox="0 0 17 19"><g fill="none" stroke="#4a4a4a" stroke-width="1.3"><path d="M6 3.5 Q6 1 8.5 1 Q11 1 11 3.5 V8.5 Q11 11 8.5 11 Q6 11 6 8.5 Z"/><path d="M3 8 Q3 14 8.5 14 Q14 14 14 8"/><path d="M8.5 14 V17.5"/><path d="M1.5 18 L15.5 1"/></g></svg>
</div>
<div style="position:absolute;left:755px;top:681.2px;width:248px;height:1px;background:#e8e8e8"></div>
<svg style="left:742px;top:700px" width="6" height="8" viewBox="0 0 6 8"><path d="M0.8 0.5 L5.2 4 L0.8 7.5 Z" fill="#a0a0a0"/></svg>
<div class="t" style="left:755.0px;top:697.1px;font-size:14.6px;font-weight:400;color:#424242;transform:scaleX(0.865);transform-origin:left;-webkit-text-stroke:0.2px #424242">Другие приглашенные (2)</div>
<div style="position:absolute;left:1015.2px;top:332.5px;width:4.8px;height:49px;background:#c6c6c6;border-radius:2px"></div>
<div style="position:absolute;left:0px;top:722px;width:1024px;height:46px;background:linear-gradient(#3a4c74 0%,#283a62 20%,#1e2d54 50%,#1c2b50 100%)"></div>
<div style="position:absolute;left:0px;top:722px;width:1024px;height:1.2px;background:#8594b8"></div>
<div style="position:absolute;left:8px;top:723.5px;width:38px;height:43px;border-radius:50%;background:radial-gradient(ellipse 70% 45% at 50% 85%, #48c0f0 0%, #2a80c8 60%, transparent 100%),radial-gradient(ellipse at 50% 25%, #b8d8f0 0%, #5a90c0 35%, #1d4a80 75%, #10305a 100%);box-shadow:0 0 0 1px #4a6a98"></div>
<svg style="left:15px;top:732px" width="25" height="25" viewBox="0 0 25 25"><path d="M3 5 Q7 3 11.5 5 L10.5 11.5 Q6 9.8 2 11.5 Z" fill="#f25022"/><path d="M12.5 5.2 Q17 7 22 5 L21 11.5 Q16 13.5 11.5 11.7 Z" fill="#7fba00"/><path d="M2 12.8 Q6 11 10.3 12.8 L9.3 19.5 Q5.5 18 1 19.5 Z" fill="#00a4ef"/><path d="M11.3 13 Q16 14.8 21 13 L20 19.5 Q15 21.5 10.3 19.7 Z" fill="#ffb900"/></svg>
<svg style="left:72px;top:725px" width="33" height="38" viewBox="0 0 33 38"><path d="M27 25 A10 11.5 0 1 1 26.5 16" fill="none" stroke="#34a8ee" stroke-width="6"/><rect x="8" y="17.5" width="21" height="4.5" fill="#34a8ee"/><path d="M4 34 Q-1 26 12 12 Q26 -2 31.5 3 Q34 7 27 14" fill="none" stroke="#f2b81c" stroke-width="2.8"/></svg>
<svg style="left:136px;top:731px" width="28" height="30" viewBox="0 0 28 30"><rect x="4" y="1" width="23" height="28" fill="#8ab8e0"/><rect x="1" y="2" width="23" height="27" fill="#b8d8f0"/><circle cx="12.5" cy="15" r="8.5" fill="#f07818"/><path d="M10 10.5 L17 15 L10 19.5 Z" fill="#fff"/></svg>
<svg style="left:196px;top:728px" width="33" height="35" viewBox="0 0 33 35"><path d="M1 5 H12 L14 2 H31 V31 H1 Z" fill="#e8c868"/><rect x="2" y="8" width="29" height="23" fill="#f8e8a8"/><rect x="5" y="6" width="9" height="4" fill="#d03030"/><rect x="17" y="6" width="9" height="4" fill="#30a030"/><rect x="6" y="20" width="21" height="14" fill="#70b8e8"/><rect x="10" y="25" width="13" height="6" fill="#f8e8a8"/></svg>
<div style="position:absolute;left:259.5px;top:726px;width:30px;height:37px;border-radius:9px;background:#1aa59c"></div>
<div style="position:absolute;left:263.5px;top:730.5px;width:22px;height:28px;border-radius:7px;background:#fff"></div>
<div class="t" style="left:267.8px;top:731.7px;font-size:24px;font-weight:700;color:#1aa59c;transform:scaleX(1.048);transform-origin:center;">e</div>
<div style="position:absolute;left:321px;top:726px;width:31.5px;height:37px;border-radius:50%;background:radial-gradient(ellipse at 45% 40%, #ff3040 0%, #d8101c 60%, #a00010 100%)"></div>
<div style="position:absolute;left:330.5px;top:730.5px;width:12.5px;height:28px;border-radius:50%;background:#1c2b50"></div>
<div style="position:absolute;left:370px;top:722.5px;width:58px;height:44px;border-radius:3px;background:linear-gradient(#aab4c8 0%,#8a96b0 45%,#7480a0 100%);box-shadow:inset 0 0 0 1px #c8d0e0"></div>
<div style="position:absolute;left:432.3px;top:722.5px;width:57.5px;height:44px;border-radius:3px;background:linear-gradient(#56648a 0%,#3c4a70 50%,#33426a 100%);box-shadow:inset 0 0 0 1px #7c88a8"></div>
<div style="position:absolute;left:494.7px;top:722.5px;width:57.5px;height:44px;border-radius:3px;background:linear-gradient(#56648a 0%,#3c4a70 50%,#33426a 100%);box-shadow:inset 0 0 0 1px #7c88a8"></div>
<svg style="left:383px;top:726px" width="32" height="37" viewBox="0 0 32 37"><ellipse cx="16" cy="18.5" rx="15.5" ry="18" fill="#db4437"/><path d="M16 18.5 L1.2 10.5 A15.5 18 0 0 0 12 36.2 Z" fill="#0f9d58"/><path d="M16 18.5 L12 36.2 A15.5 18 0 0 0 31.5 18.5 Q31.5 14 29.5 10 Z" fill="#f4c20d"/><path d="M16 18.5 L29.5 10 A15.5 18 0 0 0 1.2 10.5 Z" fill="#db4437"/><ellipse cx="16" cy="18.5" rx="7.5" ry="8.5" fill="#fff"/><ellipse cx="16" cy="18.5" rx="5.6" ry="6.5" fill="#4285f4"/></svg>
<svg style="left:444px;top:726px" width="33" height="37" viewBox="0 0 33 37"><rect x="8" y="3" width="23" height="30" fill="#f8f0e8" transform="rotate(8 19 18)"/><rect x="2" y="2" width="22" height="33" fill="#d04820"/><rect x="3" y="3" width="20" height="31" fill="#e86030"/><text x="6" y="22" font-family="Liberation Sans" font-weight="700" font-size="18" fill="#fff">P</text><circle cx="22" cy="24" r="6" fill="#e06050" stroke="#fff" stroke-width="1.5"/></svg>
<svg style="left:507px;top:726px" width="32" height="37" viewBox="0 0 32 37"><rect x="10" y="4" width="20" height="29" fill="#f0f0f8" transform="rotate(10 20 18)"/><rect x="3" y="5" width="22" height="28" fill="#e8eef8"/><text x="2.5" y="26" font-family="Liberation Sans" font-weight="700" font-size="21" fill="#1e4fa8" transform="scale(0.95 1)">W</text></svg>
<div class="t" style="left:807.9px;top:735.3px;font-size:14px;font-weight:400;color:#e8ecf4;transform:scaleX(0.751);transform-origin:center;-webkit-text-stroke:0.25px #e8ecf4">RU</div>
<svg style="left:841px;top:742px" width="9" height="6" viewBox="0 0 9 6"><path d="M0.5 5.5 L4.5 0.5 L8.5 5.5 Z" fill="#e8ecf4"/></svg>
<svg style="left:862px;top:737px" width="16" height="17" viewBox="0 0 16 17"><path d="M1 6 H4 L8.5 1.5 V15.5 L4 11 H1 Z" fill="#f0f0f0"/><path d="M10.5 5 Q12.5 8.5 10.5 12 M12.8 3 Q16 8.5 12.8 14" fill="none" stroke="#f0f0f0" stroke-width="1.3"/></svg>
<svg style="left:886px;top:740px" width="16" height="13" viewBox="0 0 16 13"><g fill="#f0f0f0"><rect x="1" y="10" width="2" height="2.5"/><rect x="4.5" y="8" width="2" height="4.5"/><rect x="8" y="5.5" width="2" height="7"/><rect x="11.5" y="2.5" width="2.2" height="10"/></g></svg>
<svg style="left:910px;top:737px" width="16" height="17" viewBox="0 0 16 17"><rect x="1" y="1" width="1.4" height="16" fill="#f0f0f0"/><path d="M3 2 Q7 0.5 10 2.5 Q12.5 3.5 15 2.5 L13 6.5 L15 9.5 Q12 10.5 9.5 8.5 Q6.5 7 3 8.5 Z" fill="#f0f0f0"/></svg>
<div class="t" style="left:954.1px;top:729.8px;font-size:13.5px;font-weight:400;color:#f0f2f8;transform:scaleX(0.799);transform-origin:center;-webkit-text-stroke:0.25px #f0f2f8">17:30</div>
<div class="t" style="left:936.8px;top:749.3px;font-size:13.5px;font-weight:400;color:#f0f2f8;transform:scaleX(0.789);transform-origin:center;-webkit-text-stroke:0.25px #f0f2f8">17.12.2020</div>
<div style="position:absolute;left:1010px;top:722px;width:14px;height:46px;background:linear-gradient(90deg,#5a6a90,#3a4a70);box-shadow:inset 1px 0 0 #8898bc"></div>
</body></html>
